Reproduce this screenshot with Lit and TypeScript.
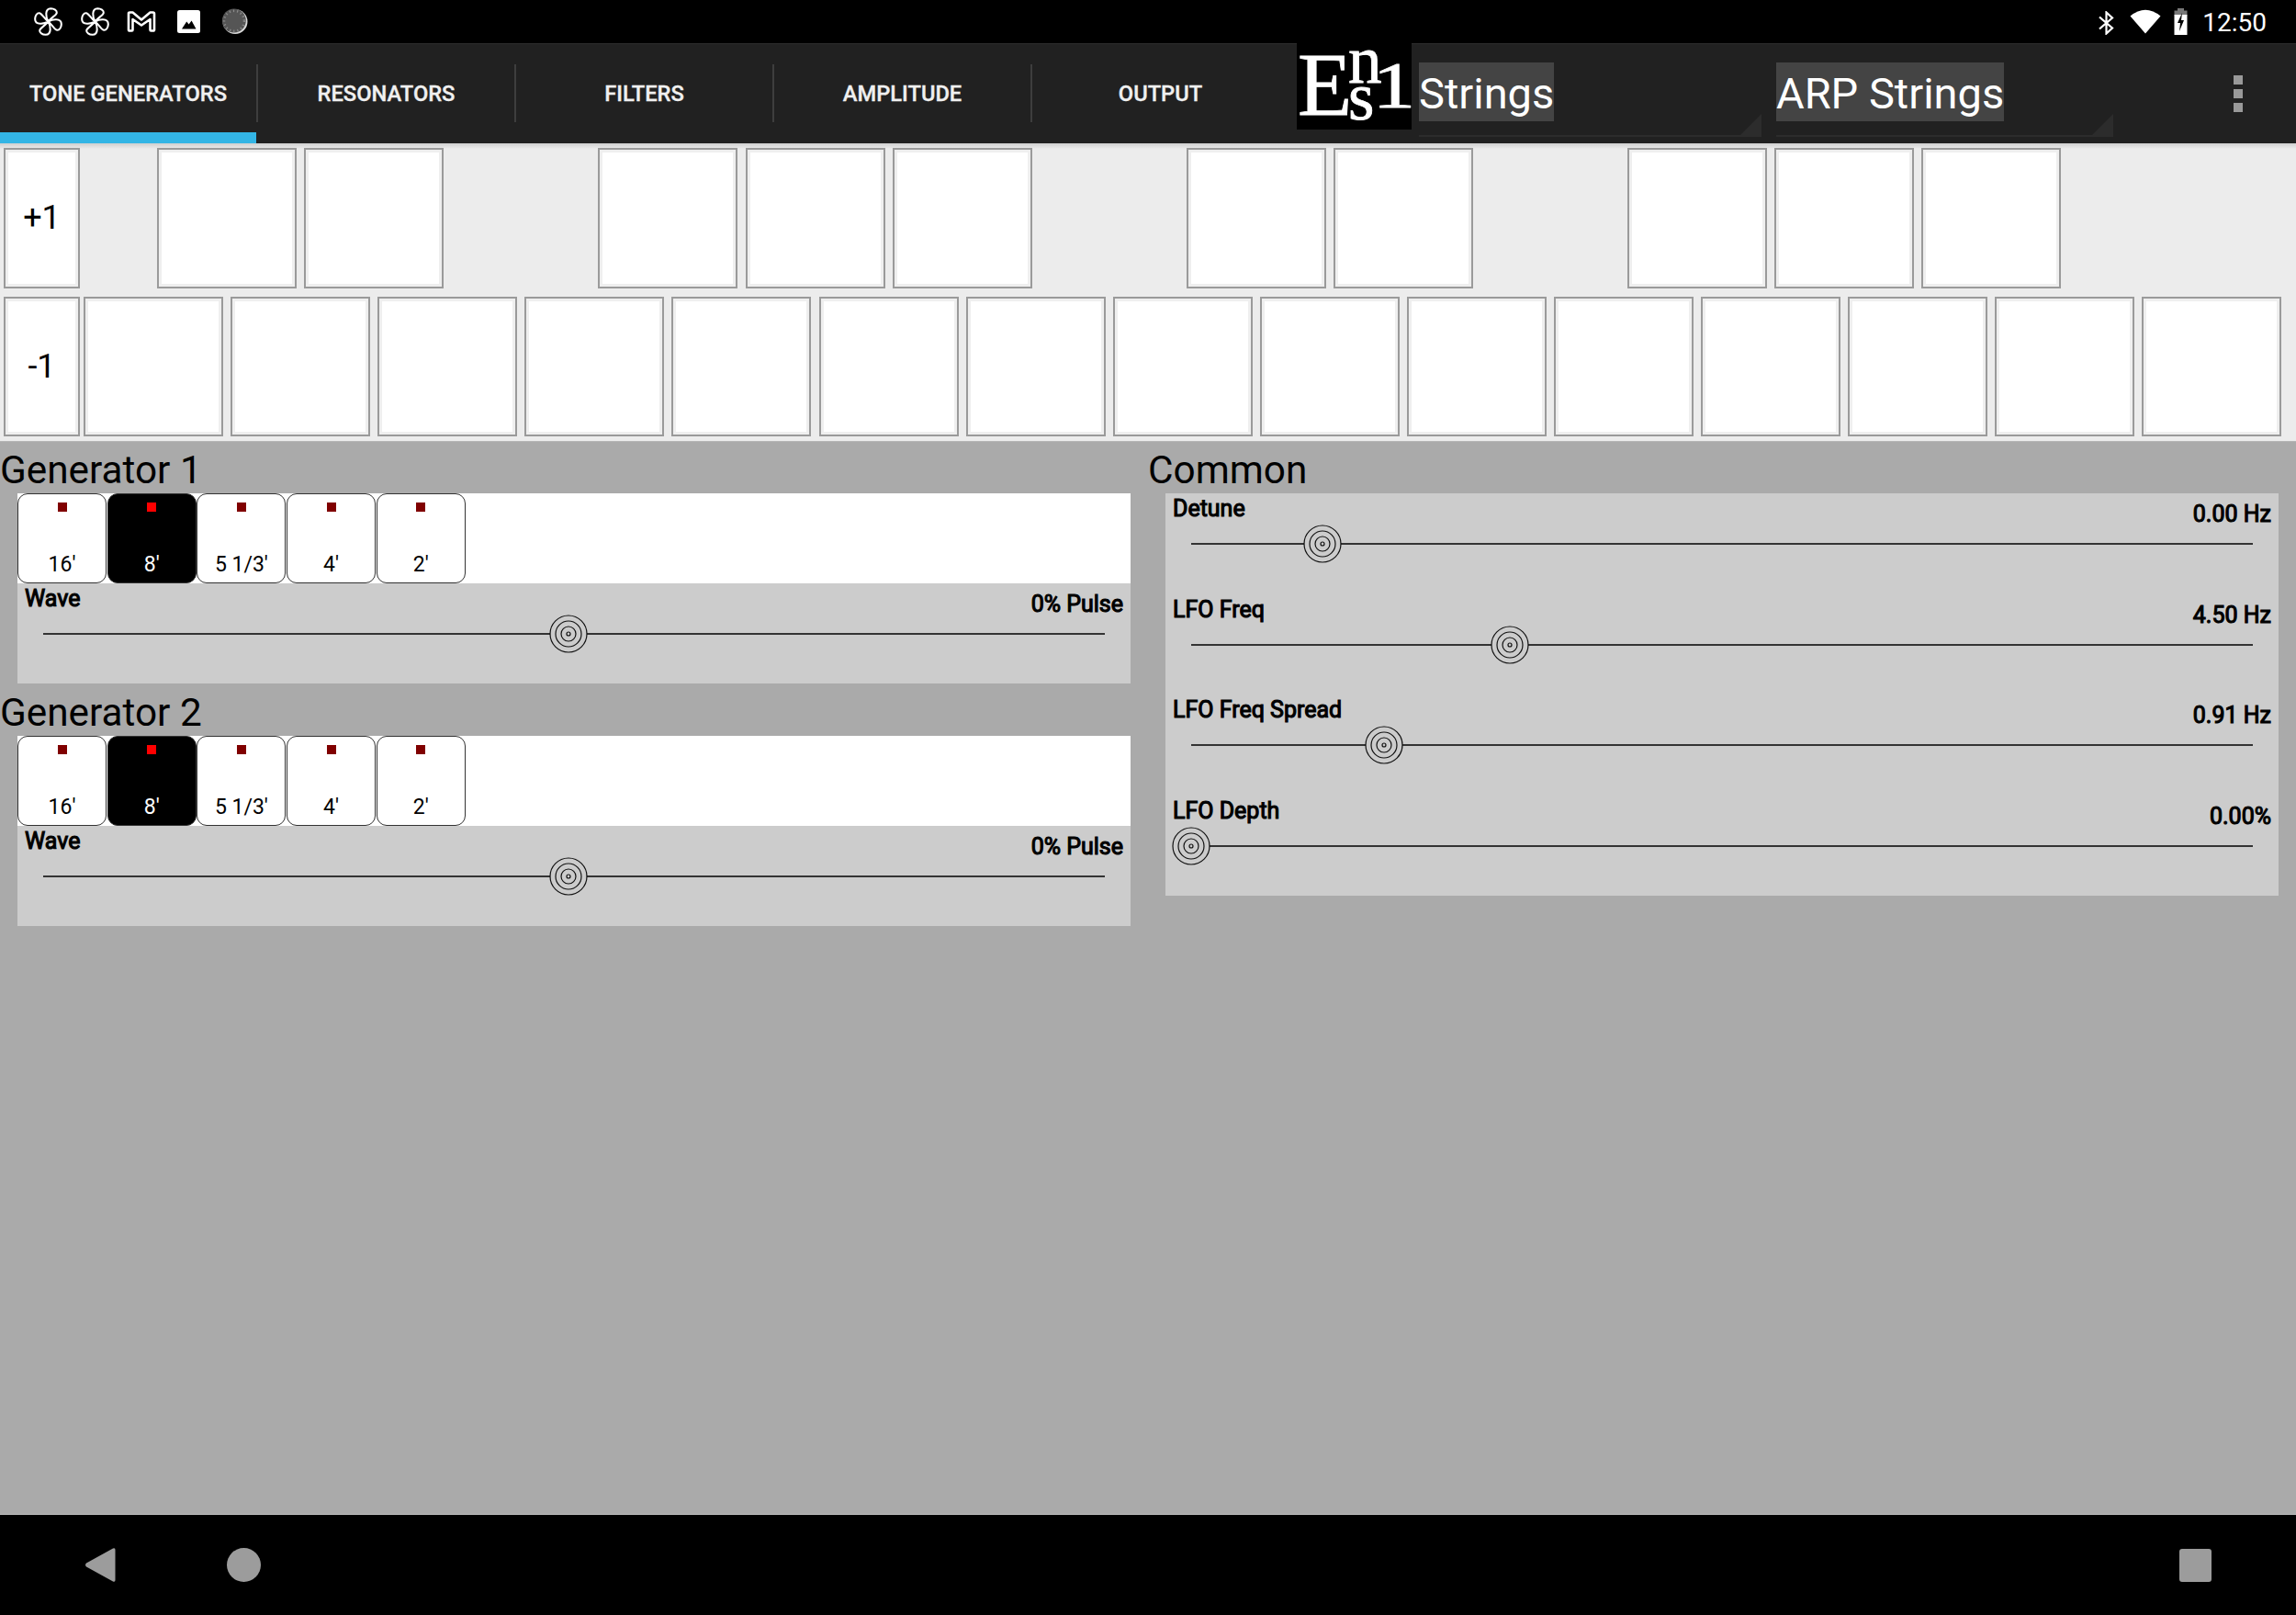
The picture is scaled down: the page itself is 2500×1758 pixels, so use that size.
import { LitElement, html, css, svg } from "lit";
import { customElement } from "lit/decorators.js";

const TABS = ["Tone Generators", "Resonators", "Filters", "Amplitude", "Output"];
const FEET = ["16'", "8'", "5 1/3'", "4'", "2'"];
// null = gap the width of one key
const UPPER: (number | null)[] = [0, 0, null, 0, 0, 0, null, 0, 0, null, 0, 0, 0];
const COMMON = [
  { label: "Detune", value: "0.00 Hz", pos: 12.37 },
  { label: "LFO Freq", value: "4.50 Hz", pos: 30.0 },
  { label: "LFO Freq Spread", value: "0.91 Hz", pos: 18.17 },
  { label: "LFO Depth", value: "0.00%", pos: 0 },
];

const petal = "M12 12C10.8 10 10.2 7.5 10.3 5.3C10.4 2.5 12 0.9 14.2 0.9C17 1 19.4 2.5 19.2 4.5C19 6.5 15.4 8 12 12Z";
const pinwheel = html`<svg class="pin" viewBox="0 0 24 24" fill="none" stroke="#fff" stroke-width="1.6" stroke-linejoin="round">
  ${[0, 90, 180, 270].map((a) => svg`<path d=${petal} transform="rotate(${a} 12 12)"></path>`)}
</svg>`;

const knob = html`<svg class="knob" viewBox="0 0 42 42" fill="none" stroke="#111" stroke-width="1.2">
  <circle cx="21" cy="21" r="20" fill="#ccc"></circle>
  <circle cx="21" cy="21" r="14"></circle>
  <circle cx="21" cy="21" r="8"></circle>
  <circle cx="21" cy="21" r="2"></circle>
</svg>`;

@customElement("app-root")
export class AppRoot extends LitElement {
  static styles = css`
    :host { display: flex; flex-direction: column; width: 2500px; height: 1758px; font-family: Roboto, sans-serif; color: #000; overflow: hidden; }

    .status { height: 47px; flex: none; background: #000; display: flex; align-items: center; color: #fff; }
    .pin { width: 31px; height: 31px; margin-right: 20px; }
    .pin:first-child { margin-left: 37px; }
    .mail { width: 32px; height: 23px; margin-right: 23px; margin-left: -1px; }
    .photo { width: 25px; height: 25px; margin-right: 24px; }
    .dial { width: 28px; height: 29px; }
    .status-right { margin-left: auto; display: flex; align-items: center; margin-right: 32px; }
    .bt { width: 19px; height: 26px; margin-top: 3px; margin-right: 16px; }
    .wifi { width: 34px; height: 27px; margin-right: 14px; }
    .batt { width: 15px; height: 29px; margin-right: 16px; }
    .time { font-size: 28px; line-height: 47px; padding-top: 2px; }

    .nav { height: 109px; flex: none; background: #212121; display: flex; box-shadow: inset 0 1px 0 #2c2c2c; position: relative; z-index: 1; }
    .tab { width: 279px; display: flex; flex-direction: column; }
    .tab-text { flex: 1; display: flex; align-items: center; justify-content: center; padding-top: 13px; font-size: 23.7px; font-weight: 500; color: #f0f0f0; text-transform: uppercase; -webkit-text-stroke: 0.35px #f0f0f0; }
    .tab-bar { height: 12px; }
    .tab.on .tab-bar { background: #33b5e5; }
    .sep { width: 2px; height: 63px; margin-top: 23px; background: #3e3e3e; }
    .logo { position: relative; width: 125px; height: 94px; background: #000; margin-left: 9px; color: #fff; font-family: "Liberation Serif", serif; line-height: 1; -webkit-text-stroke: 0.8px #fff; }
    .logo span { position: absolute; }
    .l-e { font-size: 97px; left: 1px; top: -3px; }
    .l-n { font-size: 73px; left: 56px; top: -18px; }
    .l-s { font-size: 73px; left: 56px; top: 22px; }
    .l-1 { font-size: 72px; left: 85px; top: 10px; transform: scaleX(1.3); transform-origin: 8px 0; }
    .spin { position: relative; height: 79px; margin-top: 21px; border-bottom: 2px solid #2c2c2c; box-sizing: content-box; }
    .spin.a { width: 373px; margin-left: 8px; }
    .spin.b { width: 367px; margin-left: 16px; }
    .spin-text { display: inline-block; background: #444; color: #fff; font-size: 47px; line-height: 67px; height: 64px; vertical-align: top; }
    .spin::after { content: ""; position: absolute; right: 0; bottom: 0; width: 23px; height: 23px; background: #2c2c2c; clip-path: polygon(100% 0, 100% 100%, 0 100%); }
    .dots { margin-left: auto; margin-right: 58px; display: flex; flex-direction: column; gap: 5px; padding-top: 35px; }
    .dots i { display: block; width: 10px; height: 10px; background: #999; }

    .keys { height: 324px; flex: none; box-sizing: border-box; padding: 5px 4px; background: linear-gradient(#cfcfcf, #ececec 6px); display: flex; flex-direction: column; gap: 9px; }
    .key-row { display: flex; gap: 8.1px; height: 153px; }
    .key { width: 152px; box-sizing: border-box; border: 2px solid #9a9a9a; background: #fff; box-shadow: inset 0 0 0 3px #efefef; flex: none; }
    .key.shift { width: 83px; display: flex; align-items: center; justify-content: center; font-size: 36px; }
    .key-row.lower .shift { margin-right: -4px; }
    .hole { width: 152px; flex: none; }
    .hole.first { width: 68px; }

    .main { flex: 1; background: #aaa; display: grid; grid-template-columns: 1231px 1231px; column-gap: 19px; align-content: start; border-top: 1px solid #b5b5b5; box-sizing: border-box; }
    .col { display: flex; flex-direction: column; margin-top: -1px; }
    .title { height: 57px; line-height: 63px; font-size: 42.3px; }
    .panel { margin-left: 19px; background: #ccc; }
    .feet { height: 98px; background: #fff; display: flex; gap: 0.7px; }
    .foot { width: 97px; box-sizing: border-box; border: 1px solid #333; border-radius: 11px; background: #fff; display: flex; flex-direction: column; align-items: center; padding: 9px 0 6px; font-size: 23px; line-height: 26px; color: #000; }
    .foot i { display: block; width: 10px; height: 10px; background: #800000; }
    .foot span { margin-top: auto; }
    .foot.on { background: #000; color: #fff; }
    .foot.on i { background: #f00; }

    .row { height: 109px; }
    .col.right .row { height: 109.5px; }
    .head { height: 54px; display: flex; justify-content: space-between; align-items: flex-start; padding: 0 8px; box-sizing: border-box; font-size: 25px; line-height: 30px; -webkit-text-stroke: 1.1px #000; }
    .head .v { margin-top: 8px; }
    .head .n { margin-top: 2px; }
    .track { position: relative; height: 2px; background: #333; margin: 0 28px; }
    .pin-at { position: absolute; top: 0; }
    .knob { position: absolute; top: 1px; width: 42px; height: 42px; transform: translate(-50%, -50%); }

    .bottom { height: 110px; flex: none; background: #000; display: flex; align-items: center; border-top: 1px solid #bdbdbd; box-sizing: border-box; }
    .back { width: 34px; height: 39px; margin-left: 92px; }
    .home { width: 37px; height: 37px; border-radius: 50%; background: #9c9c9c; margin-left: 121px; }
    .recent { width: 35px; height: 36px; border-radius: 3px; background: #9c9c9c; margin-left: auto; margin-right: 92px; }
  `;

  private slider(label: string, value: string, pos: number) {
    return html`<div class="row">
      <div class="head"><span class="n">${label}</span><span class="v">${value}</span></div>
      <div class="track">
        <span class="pin-at" style="left:${pos}%">${knob}</span>
      </div>
    </div>`;
  }

  private generator(name: string) {
    return html`<section>
      <div class="title">${name}</div>
      <div class="panel">
        <div class="feet">
          ${FEET.map((f, i) => html`<div class="foot ${i === 1 ? "on" : ""}"><i></i><span>${f}</span></div>`)}
        </div>
        ${this.slider("Wave", "0% Pulse", 49.48)}
      </div>
    </section>`;
  }

  render() {
    return html`
      <div class="status">
        ${pinwheel}${pinwheel}
        <svg class="mail" viewBox="0 0 32 23" fill="none" stroke="#fff" stroke-width="2.6" stroke-linejoin="round">
          <path d="M2 2.5Q2 1.5 3.5 1.5H6.5L16 9.5L25.5 1.5H28.5Q30 1.5 30 3V20.5Q30 21.5 28.5 21.5H26.5Q25.5 21.5 25.5 20.5V9L16 15.5L6.5 9V20.5Q6.5 21.5 5.5 21.5H3.5Q2 21.5 2 20.5Z"></path>
        </svg>
        <svg class="photo" viewBox="0 0 25 25">
          <rect width="25" height="25" rx="2.5" fill="#fff"></rect>
          <path d="M5 20.5L10.2 12.5L12.6 15.5L15.6 11.5L20.5 20.5Z" fill="#000"></path>
        </svg>
        <svg class="dial" viewBox="0 0 28 29">
          <circle cx="14" cy="14.5" r="13.5" fill="#d8d8d8"></circle>
          <circle cx="12.8" cy="13.5" r="13" fill="#555"></circle>
          <circle cx="13" cy="13.8" r="11" fill="none" stroke="#8c8c8c" stroke-width="2.6" stroke-dasharray="1.2 3"></circle>
        </svg>
        <div class="status-right">
          <svg class="bt" viewBox="0 0 19 26" fill="none" stroke="#fff" stroke-width="2.2">
            <path d="M2 6.5L16 18.5L9.5 24.5V1.5L16 7.5L2 19.5"></path>
          </svg>
          <svg class="wifi" viewBox="0 0 34 27"><path d="M17 26.5L0.5 7.5Q17 -6 33.5 7.5Z" fill="#fff"></path></svg>
          <svg class="batt" viewBox="0 0 15 29">
            <rect x="4" y="0" width="7" height="3" fill="#777"></rect>
            <rect x="0.5" y="2.5" width="14" height="5" fill="#777"></rect>
            <rect x="0.5" y="7" width="14" height="22" fill="#fff"></rect>
            <path d="M9 5L4 16H7L6 25L11 13H8Z" fill="#000"></path>
          </svg>
          <span class="time">12:50</span>
        </div>
      </div>

      <div class="nav">
        ${TABS.map((t, i) => html`
          <div class="tab ${i === 0 ? "on" : ""}"><div class="tab-text">${t}</div><div class="tab-bar"></div></div>
          ${i < TABS.length - 1 ? html`<div class="sep"></div>` : ""}
        `)}
        <div class="logo"><span class="l-e">E</span><span class="l-n">n</span><span class="l-s">s</span><span class="l-1">1</span></div>
        <div class="spin a"><span class="spin-text">Strings</span></div>
        <div class="spin b"><span class="spin-text">ARP Strings</span></div>
        <div class="dots"><i></i><i></i><i></i></div>
      </div>

      <div class="keys">
        <div class="key-row">
          <div class="key shift">+1</div>
          <div class="hole first"></div>
          ${UPPER.map((k) => (k === null ? html`<div class="hole"></div>` : html`<div class="key"></div>`))}
        </div>
        <div class="key-row lower">
          <div class="key shift">-1</div>
          ${Array.from({ length: 15 }, () => html`<div class="key"></div>`)}
        </div>
      </div>

      <div class="main">
        <div class="col">
          ${this.generator("Generator 1")}
          ${this.generator("Generator 2")}
        </div>
        <div class="col right">
          <section>
            <div class="title">Common</div>
            <div class="panel">
              ${COMMON.map((c) => this.slider(c.label, c.value, c.pos))}
            </div>
          </section>
        </div>
      </div>

      <div class="bottom">
        <svg class="back" viewBox="0 0 34 39"><path d="M31 1.5Q33.5 0.5 33.5 3V36Q33.5 38.5 31 37.5L2 21.5Q0 19.5 2 17.5Z" fill="#9c9c9c"></path></svg>
        <div class="home"></div>
        <div class="recent"></div>
      </div>
    `;
  }
}
